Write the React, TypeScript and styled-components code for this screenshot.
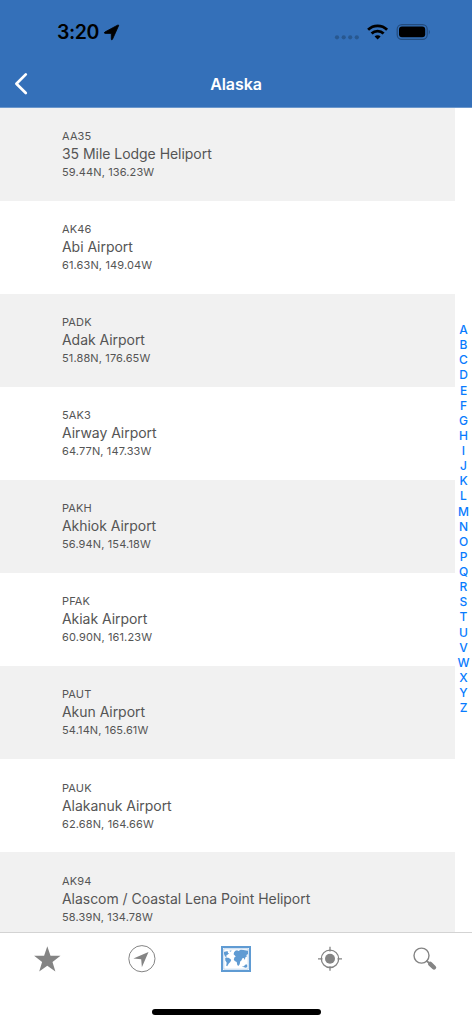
import { ReactElement } from 'react'
import styled, { createGlobalStyle } from 'styled-components'

const GlobalStyle = createGlobalStyle`
  * {
    box-sizing: border-box;
  }
  body {
    margin: 0;
    background: white;
    font-family: Inter, 'Liberation Sans', sans-serif;
  }
  p, h1, ul {
    margin: 0;
    padding: 0;
    list-style: none;
  }
`

const Screen = styled.div`
  display: flex;
  flex-direction: column;
  width: 472px;
  height: 1024px;
  overflow: hidden;
`

const Header = styled.header`
  flex: none;
  height: 107.5px;
  border-bottom: 1px solid #6b97cc;
  background: #3470b9;
`

const StatusBar = styled.div`
  display: flex;
  align-items: center;
  justify-content: space-between;
  height: 60px;
  padding: 4px 41px 0 57px;
`

const StatusGroup = styled.div`
  display: flex;
  align-items: center;
`

const Clock = styled.span`
  width: 46px;
  color: black;
  font-size: 19.5px;
  font-weight: 600;
  line-height: 24px;
  letter-spacing: -0.4px;
`

const NavBar = styled.nav`
  display: grid;
  grid-template-columns: 60px 1fr 60px;
  align-items: center;
  height: 47px;
`

const BackButton = styled.button`
  display: flex;
  padding: 0 0 0 14px;
  border: none;
  background: none;
`

const Title = styled.h1`
  color: white;
  font-size: 16px;
  font-weight: 600;
  line-height: 24px;
  letter-spacing: -0.1px;
  text-align: center;
`

const Content = styled.main`
  display: flex;
  flex: none;
  height: 824.5px;
  overflow: hidden;
`

const AirportList = styled.ul`
  width: 455px;
`

const AirportRow = styled.li`
  height: 93.1px;
  padding: 20.4px 0 0 62px;
  color: #555;
  background: white;
  &:nth-child(odd) {
    background: #f1f1f1;
  }
`

const Small = styled.p`
  font-size: 11px;
  line-height: 17px;
  letter-spacing: 0.13px;
`

const Name = styled.p`
  padding-bottom: 1px;
  font-size: 14px;
  line-height: 18px;
  letter-spacing: -0.04px;
`

const LetterIndex = styled.ul`
  display: flex;
  flex-direction: column;
  width: 17px;
  padding-top: 214.5px;
`

const Letter = styled.li`
  flex: none;
  height: 15.14px;
  color: #087bfe;
  font-size: 12px;
  font-weight: 500;
  line-height: 15.14px;
  text-align: center;
`

const TabBar = styled.nav`
  display: grid;
  flex: none;
  grid-template-columns: repeat(5, 1fr);
  height: 54px;
  border-top: 1px solid #d3d3d3;
`

const Tab = styled.button<{ $active?: boolean }>`
  display: flex;
  justify-content: center;
  padding: 11px 0 0;
  border: none;
  color: ${({ $active }) => ($active ? '#5f9bd3' : '#848484')};
  background: none;
`

const HomeIndicator = styled.div`
  flex: none;
  width: 169px;
  height: 6px;
  margin: 23px auto 0;
  border-radius: 3px;
  background: black;
`

const airports = [
  { code: 'AA35', name: '35 Mile Lodge Heliport', position: '59.44N, 136.23W' },
  { code: 'AK46', name: 'Abi Airport', position: '61.63N, 149.04W' },
  { code: 'PADK', name: 'Adak Airport', position: '51.88N, 176.65W' },
  { code: '5AK3', name: 'Airway Airport', position: '64.77N, 147.33W' },
  { code: 'PAKH', name: 'Akhiok Airport', position: '56.94N, 154.18W' },
  { code: 'PFAK', name: 'Akiak Airport', position: '60.90N, 161.23W' },
  { code: 'PAUT', name: 'Akun Airport', position: '54.14N, 165.61W' },
  { code: 'PAUK', name: 'Alakanuk Airport', position: '62.68N, 164.66W' },
  {
    code: 'AK94',
    name: 'Alascom / Coastal Lena Point Heliport',
    position: '58.39N, 134.78W',
  },
]

const letters = 'ABCDEFGHIJKLMNOPQRSTUVWXYZ'.split('')

function LocationIcon(): ReactElement {
  return (
    <svg width="17" height="17" viewBox="0 0 17 17">
      <path
        d="M15.6 1.7 9.5 15.3q-.8 1.3-1.2-.1V9.4H2.1Q.4 9 1.9 8L14.5 1.2q1.6-.6 1.1.5Z"
        fill="black"
        stroke="black"
        strokeWidth=".8"
        strokeLinejoin="round"
      />
    </svg>
  )
}

function StatusIcons(): ReactElement {
  return (
    <svg width="98" height="20" viewBox="333 22 98 20">
      <g fill="#285890">
        <circle cx="337" cy="37.3" r="2.1" />
        <circle cx="343.7" cy="37.3" r="2.1" />
        <circle cx="350.2" cy="37.3" r="2.1" />
        <circle cx="356.8" cy="37.3" r="2.1" />
      </g>
      <g fill="none" stroke="black" strokeWidth="2.8">
        <path d="M368.1 29.7a13.6 13.6 0 0 1 19 0" />
        <path d="M371.6 33.6a8.5 8.5 0 0 1 12 0" />
      </g>
      <path d="m377.6 39.4-3-3a4.2 4.2 0 0 1 6 0Z" fill="black" />
      <rect
        x="397.2"
        y="24.6"
        width="30"
        height="14.8"
        rx="4.7"
        fill="none"
        stroke="#234c7e"
        strokeWidth="1.2"
      />
      <rect x="399" y="26.6" width="26.2" height="10.7" rx="3" fill="black" />
      <path d="M428.8 29.8q2 2.2 0 4.6Z" fill="#234c7e" />
    </svg>
  )
}

function StarIcon(): ReactElement {
  return (
    <svg width="28" height="28" viewBox="0 0 28 28">
      <path
        d="m14.3 2.2 3.2 9.6h10l-8 6.1 2.9 9.7-8.1-5.8-8.1 5.8 2.9-9.7-8-6.1h10Z"
        fill="currentColor"
      />
    </svg>
  )
}

function CompassIcon(): ReactElement {
  return (
    <svg width="30" height="30" viewBox="0 0 30 30">
      <circle
        cx="14.9"
        cy="14.7"
        r="13.1"
        fill="none"
        stroke="currentColor"
        strokeWidth="1"
      />
      <path d="m21.5 8.1-6.6 15.2-.7-8-7.8-.7Z" fill="currentColor" />
    </svg>
  )
}

function MapIcon(): ReactElement {
  return (
    <svg width="30" height="28" viewBox="0 0 30 28">
      <rect
        x="1"
        y="3"
        width="28"
        height="24"
        fill="none"
        stroke="currentColor"
        strokeWidth="2"
      />
      <path
        d="M2.8 4.8h24.4v20.4H2.8Z"
        fill="none"
        stroke="currentColor"
        strokeWidth=".4"
      />
      <g fill="currentColor">
        <path d="m3 8 2.5-.8 1.7.4-.4 1.3 1.5.5-1.7 1-.7 1-1 .2.4 1 1 .6-.8.2-1.5-1.2L3 10Z" />
        <path d="m4.2 13.8 3.2-.1 2 1.3.8 1.1-.9 2-1.5 1.5-1.6 2.6-1-.5.5-3-1.4-2.3Z" />
        <path d="m8.4 6.7 1.7-.5.5.6-1 1.2-.8-.4Z" opacity=".7" />
        <path d="m12.6 10.3.5-2 1.3-1.5 1.7-.6 1.2.7 2.5-1.2 2.7.3 4.5.8v3.2l-1.5 1 .2 1.7-1.3.6-.6 2.6-1-1.8-1.4.2-1 2.3-1.2 1-.5 2.7-1.4 1.7-1-.9-.6-3.2-2-.8-.9-1.6.7-2.3 1.3-.8Z" />
        <path d="m20.7 22.7 2.2-.5 1.3-1.5 1.4-.4.8 1.6-.7 1.6-1.4.3-1-.6Z" />
      </g>
    </svg>
  )
}

function TargetIcon(): ReactElement {
  return (
    <svg width="28" height="28" viewBox="0 0 28 28">
      <g fill="none" stroke="currentColor" strokeWidth="1.3">
        <circle cx="14" cy="14.8" r="8.7" />
        <path d="M14 2.8v4.6M14 22.2v4.6M2 14.8h4.6M21.4 14.8H26" />
      </g>
      <circle cx="14" cy="14.8" r="5" fill="currentColor" />
    </svg>
  )
}

function SearchIcon(): ReactElement {
  return (
    <svg width="28" height="28" viewBox="0 0 28 28">
      <g fill="none" stroke="currentColor" strokeLinecap="round">
        <circle cx="10.5" cy="11.6" r="7.5" strokeWidth="1.4" />
        <path d="m15.8 17 2.7 2.4" strokeWidth="1.8" />
        <path d="m19.2 19.9 3.8 3.6" strokeWidth="4.4" />
      </g>
    </svg>
  )
}

export default function App(): ReactElement {
  return (
    <Screen>
      <GlobalStyle />
      <Header>
        <StatusBar>
          <StatusGroup>
            <Clock>3:20</Clock>
            <LocationIcon />
          </StatusGroup>
          <StatusIcons />
        </StatusBar>
        <NavBar>
          <BackButton aria-label="Back">
            <svg width="14" height="24" viewBox="0 0 14 24">
              <path
                d="M11.8 2.4 2.4 11.7l9.4 9.3"
                fill="none"
                stroke="white"
                strokeWidth="2.7"
                strokeLinecap="round"
                strokeLinejoin="round"
              />
            </svg>
          </BackButton>
          <Title>Alaska</Title>
        </NavBar>
      </Header>
      <Content>
        <AirportList>
          {airports.map(({ code, name, position }) => (
            <AirportRow key={code}>
              <Small>{code}</Small>
              <Name>{name}</Name>
              <Small>{position}</Small>
            </AirportRow>
          ))}
        </AirportList>
        <LetterIndex>
          {letters.map((letter) => (
            <Letter key={letter}>{letter}</Letter>
          ))}
        </LetterIndex>
      </Content>
      <TabBar>
        <Tab aria-label="Favorites">
          <StarIcon />
        </Tab>
        <Tab aria-label="Nearby">
          <CompassIcon />
        </Tab>
        <Tab aria-label="Map" $active>
          <MapIcon />
        </Tab>
        <Tab aria-label="Location">
          <TargetIcon />
        </Tab>
        <Tab aria-label="Search">
          <SearchIcon />
        </Tab>
      </TabBar>
      <HomeIndicator />
    </Screen>
  )
}
